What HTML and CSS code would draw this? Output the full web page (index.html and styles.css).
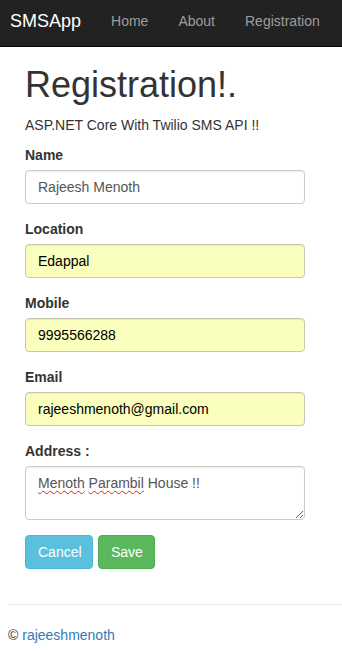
FILE: index.html
```html
<!DOCTYPE html>
<html lang="en">
<head>
<meta charset="utf-8">
<title>Registration - SMSApp</title>
<link rel="stylesheet" href="styles.css">
</head>
<body>
<nav class="navbar">
  <a class="brand" href="#">SMSApp</a>
  <a class="nav-link" href="#">Home</a>
  <a class="nav-link" href="#">About</a>
  <a class="nav-link" href="#">Registration</a>
</nav>
<main class="content">
  <h1 class="title">Registration!.</h1>
  <p class="subtitle">ASP.NET Core With Twilio SMS API !!</p>
  <form class="form">
    <div class="form-group">
      <label class="label">Name</label>
      <div class="control">Rajeesh Menoth</div>
    </div>
    <div class="form-group">
      <label class="label">Location</label>
      <div class="control autofill">Edappal</div>
    </div>
    <div class="form-group">
      <label class="label">Mobile</label>
      <div class="control autofill">9995566288</div>
    </div>
    <div class="form-group">
      <label class="label">Email</label>
      <div class="control autofill">rajeeshmenoth@gmail.com</div>
    </div>
    <div class="form-group">
      <label class="label">Address :</label>
      <div class="control textarea"><span class="spell">Menoth</span> <span class="spell">Parambil</span> House !!</div>
    </div>
    <div class="actions">
      <button type="button" class="btn btn-info">Cancel</button>
      <button type="button" class="btn btn-success">Save</button>
    </div>
  </form>
</main>
<hr class="rule">
<footer class="footer">
  <p>© <a class="footer-link" href="#">rajeeshmenoth</a></p>
</footer>
</body>
</html>
```
FILE: styles.css
```css
* { box-sizing: border-box; }
html, body { margin: 0; padding: 0; }
body {
  font-family: "Liberation Sans", Arial, sans-serif;
  font-size: 14px;
  line-height: 20px;
  color: #333;
  background: #fff;
  overflow: hidden;
}
a { text-decoration: none; }

.navbar {
  display: flex;
  height: 47px;
  background: #222;
  border-bottom: 1px solid #080808;
  padding-left: 10px;
  white-space: nowrap;
}
.brand {
  font-size: 18px;
  line-height: 20px;
  color: #fff;
  padding: 11px 15px 0 0;
}
.nav-link {
  font-size: 14px;
  line-height: 20px;
  color: #9d9d9d;
  padding: 11px 15px 0 15px;
}

.content {
  display: flow-root;
  padding: 0 25px;
}
.title {
  font-size: 36px;
  font-weight: 500;
  line-height: 1.1;
  margin: 18px 0 10px;
  color: #333;
}
.subtitle {
  margin: 0 0 10px;
}
.form {
  width: 280px;
}
.form-group {
  margin-bottom: 15px;
}
.label {
  display: block;
  font-weight: bold;
  margin-bottom: 5px;
}
.control {
  height: 34px;
  padding: 6px 12px;
  border: 1px solid #ccc;
  border-radius: 4px;
  box-shadow: inset 0 1px 1px rgba(0,0,0,0.075);
  color: #555;
  background: #fff;
  white-space: nowrap;
}
.control.autofill {
  background: #faffbd;
  color: #000;
  border-color: #c8c8b0;
}
.control.textarea {
  height: 54px;
  resize: vertical;
  overflow: auto;
  white-space: normal;
}
.spell {
  text-decoration: underline wavy #e02020;
  text-decoration-thickness: 1px;
  text-underline-offset: 2px;
}
.actions {
  display: flex;
  gap: 5px;
  margin-bottom: 15px;
}
.btn {
  font-family: inherit;
  font-size: 14px;
  line-height: 20px;
  padding: 6px 12px;
  border: 1px solid transparent;
  border-radius: 4px;
  color: #fff;
  cursor: pointer;
}
.btn-info {
  background: #5bc0de;
  border-color: #46b8da;
  width: 68px;
}
.btn-success {
  background: #5cb85c;
  border-color: #4cae4c;
  width: 57px;
}
.rule {
  margin: 20px 0 20px 8px;
  border: 0;
  border-top: 1px solid #eee;
  height: 0;
}
.footer {
  padding-left: 8px;
}
.footer p { margin: 0; }
.footer-link { color: #337ab7; }
```
